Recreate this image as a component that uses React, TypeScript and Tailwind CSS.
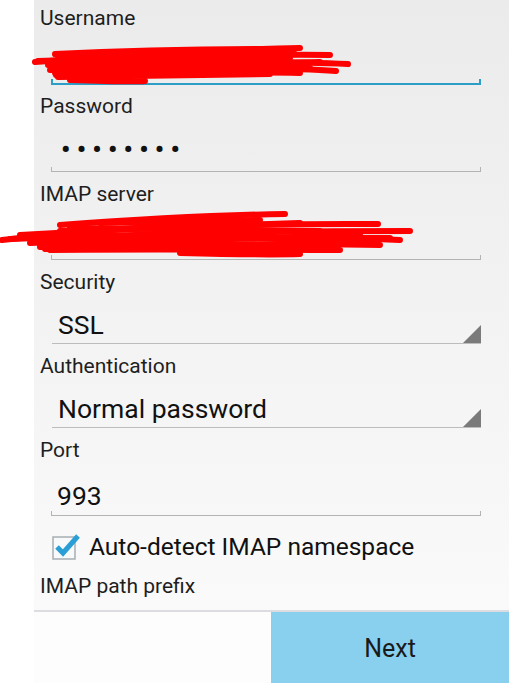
import type { ReactNode } from "react";

const font = { fontFamily: "Roboto, 'Noto Sans', Arial, sans-serif" };

function Label({ children }: { children: ReactNode }) {
  return <div className="h-[28px] text-[21px] leading-[28px] text-[#1e1e1e]">{children}</div>;
}

function TextField({ label, children, focused }: { label: string; children?: ReactNode; focused?: boolean }) {
  return (
    <div className="flex flex-col pt-[4px]">
      <Label>{label}</Label>
      <div className="ml-[11px] mr-[28px] h-[47px] pl-[6px] text-[26.5px] leading-[30px] text-[#111]">
        {children}
      </div>
      {focused ? (
        <div className="ml-[11px] mr-[28px] h-[6px] border-x-2 border-b-2 border-[#2d9fc7]" />
      ) : (
        <div className="ml-[11px] mr-[28px] h-[5px] border-x border-b border-[#b3b3b3]" />
      )}
      <div className={focused ? "h-[3px]" : "h-[4px]"} />
    </div>
  );
}

function Spinner({ label, value }: { label: string; value: string }) {
  return (
    <div className="flex flex-col pt-[4px]">
      <Label>{label}</Label>
      <div className="ml-[12px] mr-[28px] flex h-[47px] items-start justify-between pl-[6px] pt-[14px]">
        <span className="text-[26.5px] leading-[30px] text-[#111]">{value}</span>
        <svg width="18" height="18" viewBox="0 0 18 18" className="self-end">
          <polygon points="18,0 18,18 0,18" fill="#7a7a7a" />
        </svg>
      </div>
      <div className="ml-[12px] mr-[28px] h-px bg-[#bcbcbc]" />
      <div className="h-[4px]" />
    </div>
  );
}

function Scribble({ className, lines, w, h }: { className: string; lines: string[]; w: number; h: number }) {
  return (
    <svg
      width={w}
      height={h}
      viewBox={`0 0 ${w} ${h}`}
      className={`pointer-events-none absolute ${className}`}
    >
      {lines.map((d, i) => (
        <path key={i} d={d} stroke="#ff0000" strokeWidth="6" strokeLinecap="round" fill="none" />
      ))}
    </svg>
  );
}

function CheckBox() {
  return (
    <svg width="30" height="28" viewBox="0 0 30 28">
      <rect x="1" y="4" width="22" height="22" fill="#f7f9fa" stroke="#a6aeb3" strokeWidth="1.5" />
      <path d="M5 14 L11 20 L26 3" stroke="#2a9fd6" strokeWidth="5" fill="none" strokeLinejoin="miter" />
    </svg>
  );
}

export default function App() {
  return (
    <div className="relative flex h-[683px] w-[509px] flex-col overflow-hidden bg-white" style={font}>
      <div className="flex">
        <div className="w-[34px] shrink-0 bg-white" />
        <div className="flex flex-1 flex-col bg-gradient-to-b from-[#ebebeb] to-[#fafafa] pl-[6px]">
          <TextField label="Username" focused />
          <TextField label="Password">
            <div className="pl-[4px] pt-[14px] text-[26px] font-bold tracking-[6.3px]">••••••••</div>
          </TextField>
          <TextField label="IMAP server" />
          <Spinner label="Security" value="SSL" />
          <Spinner label="Authentication" value="Normal password" />
          <TextField label="Port">
            <div className="pt-[17px]">993</div>
          </TextField>
          <div className="flex h-[52px] items-center gap-[7px] pl-[12px] pt-[2px]">
            <CheckBox />
            <span className="text-[24.5px] text-[#111]">Auto-detect IMAP namespace</span>
          </div>
          <Label>IMAP path prefix</Label>
          <div className="h-[10px]" />
        </div>
      </div>
      <div className="ml-[34px] flex flex-1 border-t-2 border-[#dcdde0] bg-[#fdfdfd]">
        <div className="flex-1" />
        <button className="flex w-[238px] items-center justify-center bg-[#88d0ee] pt-[3px] text-[25px] text-[#1a1a1a]">
          Next
        </button>
      </div>

      <Scribble
        className="left-0 top-[40px]"
        w={360}
        h={50}
        lines={[
          "M35 22 C 90 18, 200 10, 300 8",
          "M55 14 C 140 10, 230 9, 295 9",
          "M38 21 C 150 17, 260 14, 330 15",
          "M48 25 C 160 22, 270 20, 348 24",
          "M52 29 C 160 27, 270 26, 336 31",
          "M55 33 C 150 32, 240 31, 300 33",
          "M58 37 C 130 36, 200 35, 270 34",
          "M70 40 C 100 41, 130 42, 145 41",
          "M60 18 L 280 12",
          "M50 30 L 320 22",
          "M58 16 L 290 18",
          "M54 27 L 310 28",
          "M56 35 L 280 29",
          "M62 20 L 300 25",
        ]}
      />
      <Scribble
        className="left-0 top-[205px]"
        w={420}
        h={55}
        lines={[
          "M2 35 C 60 28, 130 22, 200 20",
          "M60 20 C 140 14, 220 10, 285 9",
          "M20 30 C 120 24, 260 18, 378 19",
          "M10 34 C 140 29, 290 26, 410 26",
          "M30 38 C 150 34, 300 31, 400 35",
          "M40 42 C 160 40, 300 38, 380 40",
          "M50 45 C 150 44, 280 45, 340 45",
          "M180 48 C 220 49, 270 50, 300 49",
          "M60 26 L 300 18",
          "M40 40 L 360 30",
          "M70 23 L 320 26",
          "M35 33 L 390 33",
          "M45 44 L 370 37",
          "M80 36 L 300 42",
          "M100 18 L 260 15",
        ]}
      />
    </div>
  );
}
